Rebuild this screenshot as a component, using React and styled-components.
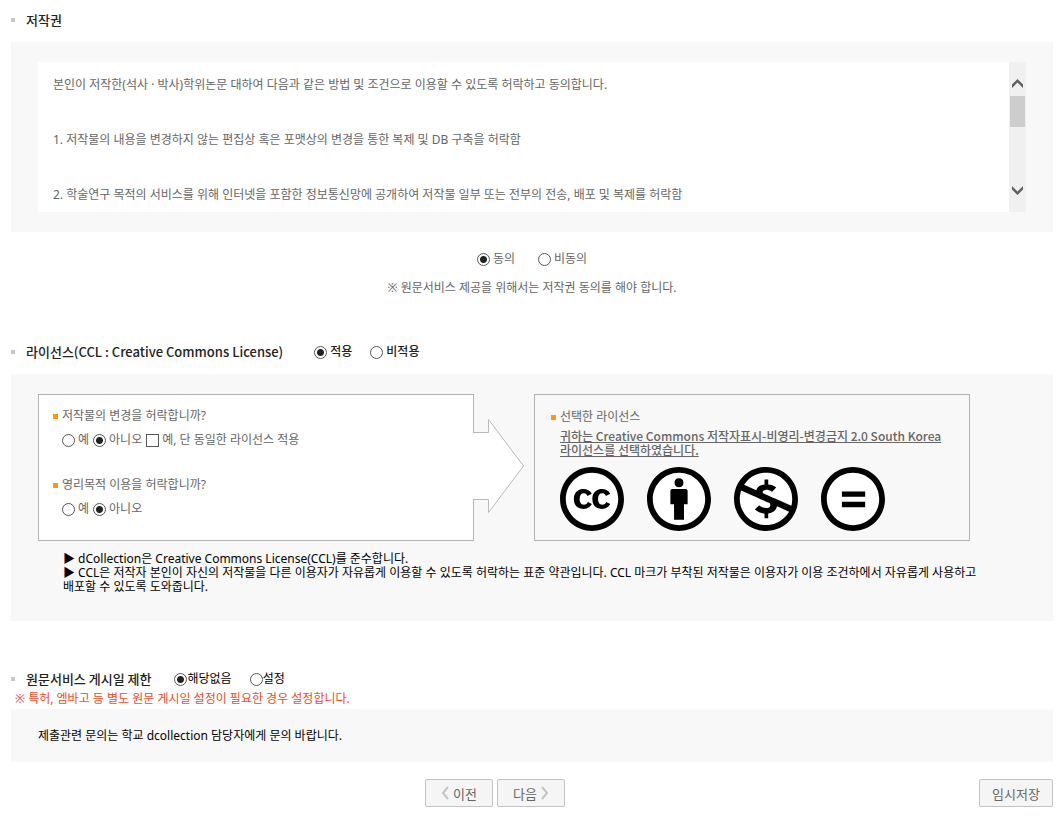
import React, { useState } from 'react';
import styled, { createGlobalStyle, css } from 'styled-components';
import {
  FaCreativeCommons,
  FaCreativeCommonsBy,
  FaCreativeCommonsNc,
  FaCreativeCommonsNd,
} from 'react-icons/fa6';

const GlobalStyle = createGlobalStyle`
  * {
    box-sizing: border-box;
  }

  body {
    margin: 0;
    background: #fff;
    color: #666;
    font-family: 'Noto Sans', 'Noto Sans CJK KR', sans-serif;
    font-size: 12px;
    line-height: 18px;
    word-break: keep-all;
  }
`;

const Page = styled.main`
  padding: 9px 9px 14px 11px;
`;

const SectionHead = styled.div`
  display: flex;
  align-items: center;
  min-height: 22px;
  gap: 31px;
  margin-bottom: 11px;
  color: #222;
  font-weight: 500;

  ${({ $tight }) => $tight && css`
    gap: 23px;
    margin: 47px 0 0;
    font-weight: 400;
    color: #000;
  `}
`;

const Title = styled.h2`
  display: flex;
  align-items: center;
  gap: 11px;
  margin: 0;
  color: #222;
  font-family: 'Noto Sans CJK KR', sans-serif;
  font-size: 13px;
  font-weight: 500;

  &::before {
    content: '';
    width: 4px;
    height: 4px;
    background: #c8c8c8;
  }
`;

const Panel = styled.section`
  background: #f8f8f8;
  padding: ${({ $pad }) => $pad || '20px 27px'};
`;

const TermsBox = styled.div`
  display: flex;
  height: 150px;
  background: #fff;
`;

const TermsText = styled.div`
  flex: 1;
  overflow: hidden;
  padding: 14px 15px 0;

  p {
    margin: 0 0 37px;
  }
`;

const ScrollTrack = styled.div`
  display: flex;
  flex-direction: column;
  width: 17px;
  padding: 13px 1px;
  background: #f0f0f0;
`;

const ScrollButton = styled.button`
  display: flex;
  align-items: center;
  justify-content: center;
  height: 17px;
  padding: 0;
  border: 0;
  background: none;
`;

const ScrollThumb = styled.div`
  height: 31px;
  margin: 4px 0 auto;
  background: #cdcdcd;
`;

const RadioRow = styled.div`
  display: flex;
  align-items: center;
  justify-content: ${({ $center }) => ($center ? 'center' : 'flex-start')};
  gap: ${({ $gap }) => $gap || 18}px;
`;

const Choice = styled.label`
  display: flex;
  align-items: center;
  gap: ${({ $gap }) => $gap ?? 3}px;

  input {
    appearance: none;
    flex: none;
    width: 13px;
    height: 13px;
    margin: 0;
    border: 1px solid #555;
    background: #fff;
  }

  input[type='radio'] {
    border-radius: 50%;
  }

  input[type='radio']:checked {
    background: radial-gradient(circle, #222 3px, #fff 4px);
  }

  input[type='checkbox']:checked {
    background: #222;
    box-shadow: inset 0 0 0 2px #fff;
  }
`;

const Consent = styled.div`
  display: flex;
  flex-direction: column;
  gap: 11px;
  padding: 18px 0 44px;
  text-align: center;

  p {
    margin: 0;
  }
`;

const LicenseRow = styled.div`
  display: flex;
  gap: 60px;
`;

const LicenseBox = styled.div`
  position: relative;
  flex: 0 1 436px;
  min-height: 147px;
  padding: ${({ $pad }) => $pad};
  border: 1px solid #b3b3b3;
  background: ${({ $bg }) => $bg || 'transparent'};
`;

const ArrowTip = styled.svg`
  position: absolute;
  top: 23px;
  left: 100%;
`;

const Question = styled.div`
  display: flex;
  align-items: center;
  gap: 4px;

  &::before {
    content: '';
    width: 5px;
    height: 5px;
    background: #f90;
  }
`;

const Answers = styled.div`
  display: flex;
  gap: 4px;
  padding: 6px 0 0 9px;

  & + ${Question} {
    margin-top: 27px;
  }
`;

const LicenseLink = styled.a`
  display: block;
  margin: 3px 0 9px 9px;
  color: #666;
  font-family: 'Noto Sans CJK KR', sans-serif;
  font-weight: 500;
  line-height: 14px;
`;

const Marks = styled.div`
  display: flex;
  gap: 23px;
  margin-left: 9px;
  color: #000;

  svg {
    width: 64px;
    height: 66px;
    background: radial-gradient(circle, #fff 28px, transparent 30px);
  }
`;

const Notes = styled.p`
  margin: 0;
  padding: 11px 25px 0;
  color: #000;
  line-height: 14px;
`;

const Warning = styled.p`
  margin: 0;
  padding: 0 4px 1px;
  color: #f04b1e;
`;

const Inquiry = styled.p`
  margin: 0;
  color: #000;
`;

const Footer = styled.footer`
  display: flex;
  padding-top: 17px;
`;

const Steps = styled.div`
  display: flex;
  flex: 1;
  justify-content: center;
  gap: 4px;
`;

const Button = styled.button`
  display: flex;
  align-items: center;
  justify-content: center;
  gap: 4px;
  width: ${({ $width }) => $width || 68}px;
  height: 28px;
  padding: 0;
  border: 1px solid #c3c3c3;
  border-radius: 2px;
  background: #f5f5f5;
  color: #666;
  font-family: inherit;
  font-size: 13px;
`;

const Chevron = ({ d }) => (
  <svg width="8" height="14" viewBox="0 0 8 14" fill="none" stroke="#c4c4c4" strokeWidth="2">
    <path d={d} />
  </svg>
);

const ScrollArrow = ({ d }) => (
  <svg width="11" height="9" viewBox="0 0 11 9" fill="#606060">
    <path d={d} />
  </svg>
);

const Option = ({ name, value, state, gap, children }) => {
  const [current, setCurrent] = state;
  return (
    <Choice $gap={gap}>
      <input type="radio" name={name} checked={current === value} onChange={() => setCurrent(value)} />
      {children}
    </Choice>
  );
};

const App = () => {
  const agree = useState('yes');
  const ccl = useState('on');
  const change = useState('no');
  const profit = useState('no');
  const embargo = useState('none');

  return (
    <>
      <GlobalStyle />
      <Page>
        <SectionHead>
          <Title>저작권</Title>
        </SectionHead>
        <Panel>
          <TermsBox>
            <TermsText>
              <p>본인이 저작한(석사 · 박사)학위논문 대하여 다음과 같은 방법 및 조건으로 이용할 수 있도록 허락하고 동의합니다.</p>
              <p>1. 저작물의 내용을 변경하지 않는 편집상 혹은 포맷상의 변경을 통한 복제 및 DB 구축을 허락함</p>
              <p>2. 학술연구 목적의 서비스를 위해 인터넷을 포함한 정보통신망에 공개하여 저작물 일부 또는 전부의 전송, 배포 및 복제를 허락함</p>
            </TermsText>
            <ScrollTrack>
              <ScrollButton type="button" aria-label="위로">
                <ScrollArrow d="M0 5.5 L5.5 0 L11 5.5 V9 L5.5 3.5 L0 9 Z" />
              </ScrollButton>
              <ScrollThumb />
              <ScrollButton type="button" aria-label="아래로">
                <ScrollArrow d="M0 0 L5.5 5.5 L11 0 V3.5 L5.5 9 L0 3.5 Z" />
              </ScrollButton>
            </ScrollTrack>
          </TermsBox>
        </Panel>

        <Consent>
          <RadioRow $center $gap={23}>
            <Option name="agree" value="yes" state={agree}>동의</Option>
            <Option name="agree" value="no" state={agree}>비동의</Option>
          </RadioRow>
          <p>※ 원문서비스 제공을 위해서는 저작권 동의를 해야 합니다.</p>
        </Consent>

        <SectionHead>
          <Title>라이선스(CCL : Creative Commons License)</Title>
          <RadioRow>
            <Option name="ccl" value="on" state={ccl}>적용</Option>
            <Option name="ccl" value="off" state={ccl}>비적용</Option>
          </RadioRow>
        </SectionHead>
        <Panel $pad="20px 27px 27px">
          <LicenseRow>
            <LicenseBox $bg="#fff" $pad="12px 14px">
              <Question>저작물의 변경을 허락합니까?</Question>
              <Answers>
                <Option name="change" value="yes" state={change}>예</Option>
                <Option name="change" value="no" state={change}>아니오</Option>
                <Choice>
                  <input type="checkbox" name="sharealike" />
                  예, 단 동일한 라이선스 적용
                </Choice>
              </Answers>
              <Question>영리목적 이용을 허락합니까?</Question>
              <Answers>
                <Option name="profit" value="yes" state={profit}>예</Option>
                <Option name="profit" value="no" state={profit}>아니오</Option>
              </Answers>
              <ArrowTip width="52" height="98" viewBox="0 0 52 98">
                <path d="M0 14.5 H15.5 V1.5 L50.5 48 L15.5 94.5 V81.5 H0" fill="#fff" stroke="#b9b9b9" />
              </ArrowTip>
            </LicenseBox>
            <LicenseBox $pad="13px 16px 8px">
              <Question>선택한 라이선스</Question>
              <LicenseLink href="#license">
                귀하는 Creative Commons 저작자표시-비영리-변경금지 2.0 South Korea 라이선스를 선택하였습니다.
              </LicenseLink>
              <Marks>
                <FaCreativeCommons />
                <FaCreativeCommonsBy />
                <FaCreativeCommonsNc />
                <FaCreativeCommonsNd />
              </Marks>
            </LicenseBox>
          </LicenseRow>
          <Notes>
            ▶ dCollection은 Creative Commons License(CCL)를 준수합니다.
            <br />
            ▶ CCL은 저작자 본인이 자신의 저작물을 다른 이용자가 자유롭게 이용할 수 있도록 허락하는 표준 약관입니다. CCL 마크가 부착된 저작물은 이용자가 이용 조건하에서 자유롭게 사용하고 배포할 수 있도록 도와줍니다.
          </Notes>
        </Panel>

        <SectionHead $tight>
          <Title>원문서비스 게시일 제한</Title>
          <RadioRow>
            <Option name="embargo" value="none" state={embargo} gap={0}>해당없음</Option>
            <Option name="embargo" value="set" state={embargo} gap={0}>설정</Option>
          </RadioRow>
        </SectionHead>
        <Warning>※ 특허, 엠바고 등 별도 원문 게시일 설정이 필요한 경우 설정합니다.</Warning>
        <Panel $pad="18px 27px 17px">
          <Inquiry>제출관련 문의는 학교 dcollection 담당자에게 문의 바랍니다.</Inquiry>
        </Panel>

        <Footer>
          <Steps>
            <Button type="button">
              <Chevron d="M7 1 L2 7 L7 13" />
              이전
            </Button>
            <Button type="button">
              다음
              <Chevron d="M1 1 L6 7 L1 13" />
            </Button>
          </Steps>
          <Button type="button" $width={74}>임시저장</Button>
        </Footer>
      </Page>
    </>
  );
};

export default App;
